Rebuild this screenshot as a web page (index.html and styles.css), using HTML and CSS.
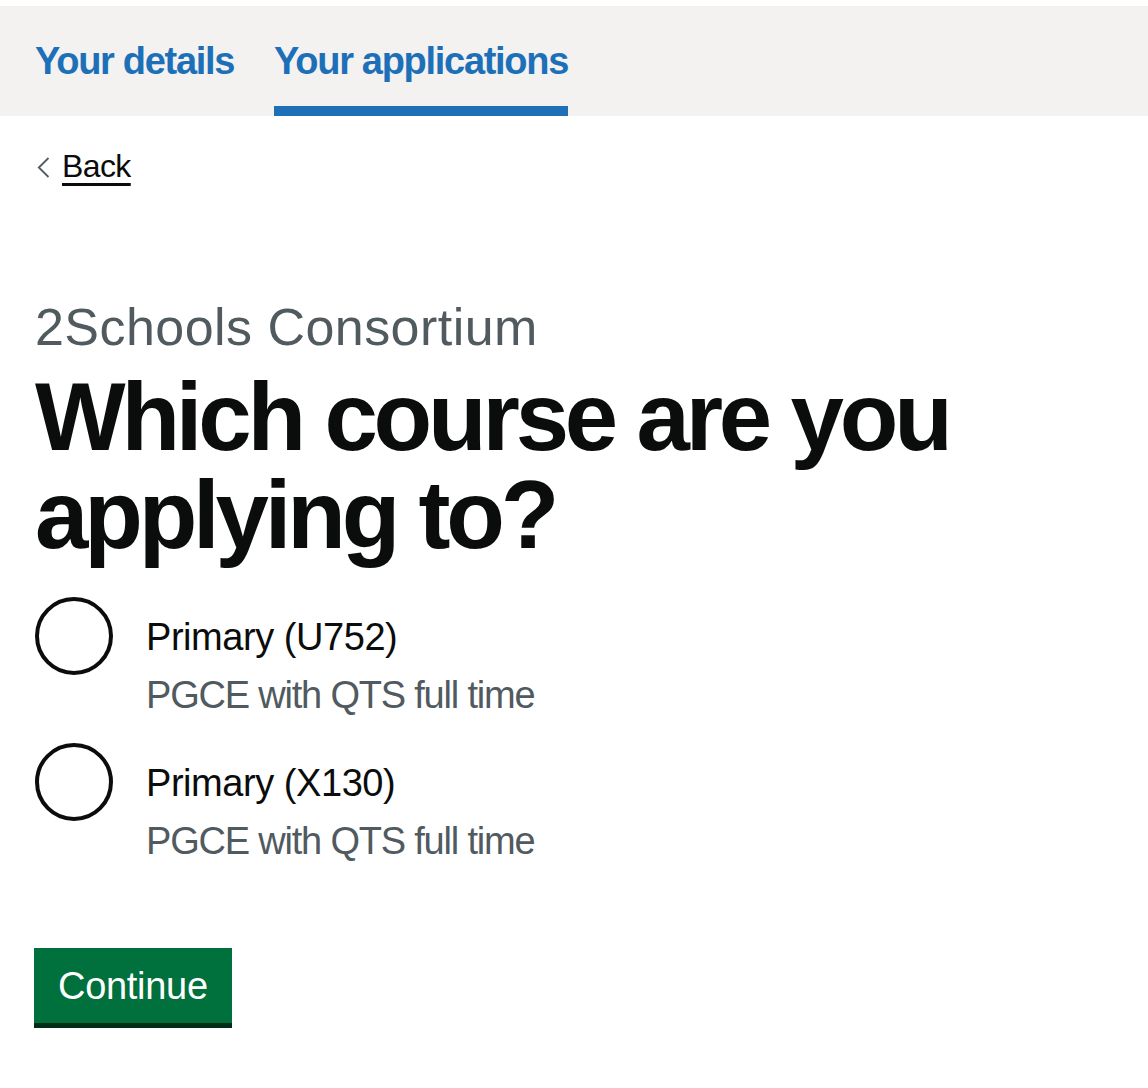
FILE: index.html
```html
<!DOCTYPE html>
<html lang="en">
<head>
<meta charset="utf-8">
<title>Which course are you applying to?</title>
<link rel="stylesheet" href="styles.css">
</head>
<body>
<header class="subnav">
  <a class="subnav-item" href="#">Your details</a>
  <a class="subnav-item subnav-item-active" href="#">Your applications</a>
</header>
<main class="main">
  <a class="back-link" href="#">
    <svg class="back-chevron" width="13" height="21" viewBox="0 0 13 21" aria-hidden="true"><polyline points="11.5,1 1.8,10.5 11.5,20" fill="none" stroke="#505a5f" stroke-width="1.8"/></svg>
    <span class="back-text">Back</span>
  </a>
  <span class="caption">2Schools Consortium</span>
  <h1 class="heading">Which course are you applying to?</h1>
  <div class="radios">
    <div class="radio">
      <span class="radio-circle"></span>
      <div class="radio-text">
        <div class="radio-label">Primary (U752)</div>
        <div class="radio-hint">PGCE with QTS full time</div>
      </div>
    </div>
    <div class="radio">
      <span class="radio-circle"></span>
      <div class="radio-text">
        <div class="radio-label">Primary (X130)</div>
        <div class="radio-hint">PGCE with QTS full time</div>
      </div>
    </div>
  </div>
  <button class="button" type="button">Continue</button>
</main>
</body>
</html>
```

FILE: styles.css
```css
html, body {
  margin: 0;
  padding: 0;
  background: #ffffff;
}
body {
  font-family: "Liberation Sans", Arial, sans-serif;
  color: #0b0c0c;
}
.subnav {
  margin-top: 6px;
  height: 110px;
  background: #f3f2f1;
  display: flex;
  gap: 40px;
  padding-left: 35px;
}
.subnav-item {
  box-sizing: border-box;
  height: 110px;
  padding-top: 36px;
  font-size: 38px;
  line-height: 38px;
  font-weight: 700;
  letter-spacing: -1.3px;
  color: #1d70b8;
  text-decoration: none;
  border-bottom: 10px solid transparent;
}
.subnav-item-active {
  border-bottom-color: #1d70b8;
}
.main {
  padding: 0 35px;
}
.back-link {
  display: flex;
  align-items: center;
  margin-top: 34px;
  color: #0b0c0c;
  text-decoration: none;
  font-size: 32px;
  line-height: 32px;
}
.back-chevron {
  margin-left: 2px;
  margin-right: 12px;
  margin-top: 2px;
}
.back-text {
  letter-spacing: -0.6px;
  text-decoration: underline;
  text-decoration-thickness: 2.5px;
  text-underline-offset: 6px;
}
.caption {
  display: block;
  margin-top: 119px;
  font-size: 52px;
  line-height: 52px;
  letter-spacing: 0.45px;
  color: #505a5f;
}
.heading {
  margin: 15px 0 0;
  font-size: 96px;
  line-height: 98px;
  font-weight: 700;
  letter-spacing: -4.2px;
  color: #0b0c0c;
  max-width: 960px;
}
.radios {
  margin-top: 33px;
}
.radio {
  display: flex;
  align-items: flex-start;
}
.radio + .radio {
  margin-top: 29px;
}
.radio-circle {
  box-sizing: border-box;
  flex: none;
  width: 78px;
  height: 78px;
  border: 4px solid #0b0c0c;
  border-radius: 50%;
  margin-right: 33px;
}
.radio-label {
  padding-top: 21px;
  font-size: 38px;
  line-height: 38px;
  letter-spacing: -0.45px;
  color: #0b0c0c;
}
.radio-hint {
  margin-top: 20px;
  font-size: 38px;
  line-height: 38px;
  letter-spacing: -1.2px;
  color: #505a5f;
}
.button {
  display: block;
  margin-top: 88px;
  margin-left: -1px;
  padding: 19px 24px 18px;
  border: 0;
  border-bottom: 5px solid #002d18;
  border-radius: 0;
  background: #00703c;
  color: #ffffff;
  font-family: "Liberation Sans", Arial, sans-serif;
  font-size: 38px;
  line-height: 38px;
  letter-spacing: -0.3px;
  cursor: pointer;
}
```
